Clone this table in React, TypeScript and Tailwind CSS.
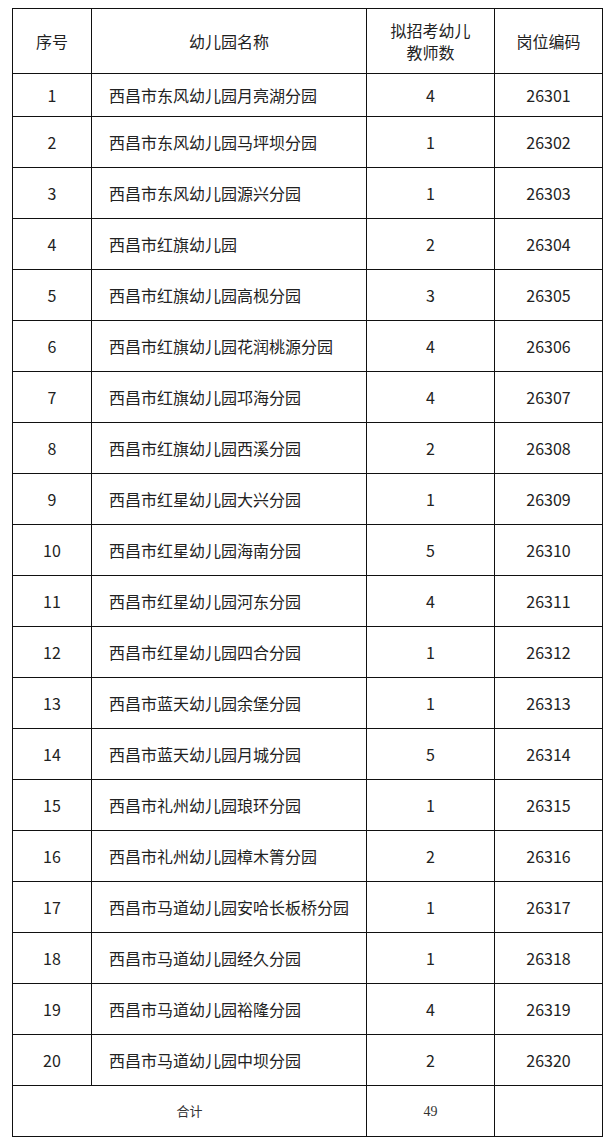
import React from 'react';

const rows: [string, number, string][] = [
  ['西昌市东风幼儿园月亮湖分园', 4, '26301'],
  ['西昌市东风幼儿园马坪坝分园', 1, '26302'],
  ['西昌市东风幼儿园源兴分园', 1, '26303'],
  ['西昌市红旗幼儿园', 2, '26304'],
  ['西昌市红旗幼儿园高枧分园', 3, '26305'],
  ['西昌市红旗幼儿园花润桃源分园', 4, '26306'],
  ['西昌市红旗幼儿园邛海分园', 4, '26307'],
  ['西昌市红旗幼儿园西溪分园', 2, '26308'],
  ['西昌市红星幼儿园大兴分园', 1, '26309'],
  ['西昌市红星幼儿园海南分园', 5, '26310'],
  ['西昌市红星幼儿园河东分园', 4, '26311'],
  ['西昌市红星幼儿园四合分园', 1, '26312'],
  ['西昌市蓝天幼儿园余堡分园', 1, '26313'],
  ['西昌市蓝天幼儿园月城分园', 5, '26314'],
  ['西昌市礼州幼儿园琅环分园', 1, '26315'],
  ['西昌市礼州幼儿园樟木箐分园', 2, '26316'],
  ['西昌市马道幼儿园安哈长板桥分园', 1, '26317'],
  ['西昌市马道幼儿园经久分园', 1, '26318'],
  ['西昌市马道幼儿园裕隆分园', 4, '26319'],
  ['西昌市马道幼儿园中坝分园', 2, '26320'],
];

const cell = 'border border-[#111] p-0 align-middle';

export default function App() {
  return (
    <div className="min-h-[1145px] w-[614px] bg-white pt-[8px] pl-[12px] font-['Noto_Sans_CJK_SC',sans-serif] text-[16px] text-[#222]">
      <table className="w-[590px] table-fixed border-collapse">
        <colgroup>
          <col className="w-[79px]" />
          <col className="w-[275px]" />
          <col className="w-[128px]" />
          <col className="w-[108px]" />
        </colgroup>
        <thead>
          <tr className="h-[65px]">
            <th className={`${cell} text-center font-normal`}>序号</th>
            <th className={`${cell} text-center font-normal`}>幼儿园名称</th>
            <th className={`${cell} text-center font-normal leading-[22px]`}>
              拟招考幼儿
              <br />
              教师数
            </th>
            <th className={`${cell} text-center font-normal`}>岗位编码</th>
          </tr>
        </thead>
        <tbody>
          {rows.map(([name, n, code], i) => (
            <tr key={code} className={i === 0 ? 'h-[43px]' : 'h-[51px]'}>
              <td className={`${cell} text-center`}>{i + 1}</td>
              <td className={`${cell} pl-[17px] text-left`}>{name}</td>
              <td className={`${cell} text-center`}>{n}</td>
              <td className={`${cell} text-center`}>{code}</td>
            </tr>
          ))}
          <tr className="h-[51px]">
            <td colSpan={2} className={`${cell} text-center text-[13px] text-[#333]`}>
              合计
            </td>
            <td className={`${cell} text-center font-['Liberation_Serif',serif] text-[14px] text-[#333]`}>
              49
            </td>
            <td className={cell}></td>
          </tr>
        </tbody>
      </table>
    </div>
  );
}
